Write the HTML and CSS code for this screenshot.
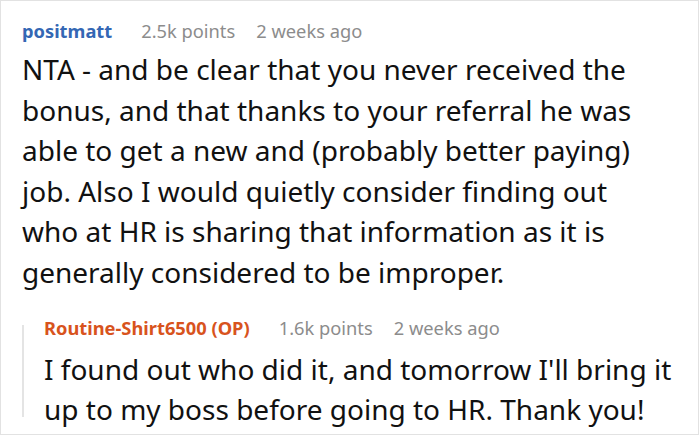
FILE: index.html
```html
<!DOCTYPE html>
<html>
<head>
<meta charset="utf-8">
<link rel="stylesheet" href="styles.css">
</head>
<body>
<div class="frame">
  <div class="comment">
    <div class="meta">
      <span class="author">positmatt</span>
      <span class="info">2.5k points</span>
      <span class="info">2 weeks ago</span>
    </div>
    <p class="body">NTA - and be clear that you never received the bonus, and that thanks to your referral he was able to get a new and (probably better paying) job. Also I would quietly consider finding out who at HR is sharing that information as it is generally considered to be improper.</p>
    <div class="reply">
      <div class="meta">
        <span class="author op">Routine-Shirt6500 (OP)</span>
        <span class="info">1.6k points</span>
        <span class="info">2 weeks ago</span>
      </div>
      <p class="body">I found out who did it, and tomorrow I'll bring it up to my boss before going to HR. Thank you!</p>
    </div>
  </div>
</div>
</body>
</html>
```
FILE: styles.css
```css
html, body {
  margin: 0;
  padding: 0;
  background: #fff;
}
.frame {
  box-sizing: border-box;
  width: 699px;
  height: 435px;
  border: 1px solid #e2e2e2;
  overflow: hidden;
  font-family: "Noto Sans", "Open Sans", sans-serif;
}
.comment {
  padding: 18px 0 0 21px;
}
.meta {
  display: flex;
  gap: 21px;
  font-size: 18.3px;
  line-height: 24px;
  height: 24px;
}
.author {
  font-weight: 700;
  color: #3467b4;
  margin-right: 8px;
}
.author.op {
  color: #d8531d;
}
.info {
  color: #8c8c8c;
}
.body {
  margin: 6px 0 0 0;
  font-size: 28px;
  line-height: 40.5px;
  color: #111;
  width: 645px;
}
.reply {
  margin-top: 24px;
  padding-left: 22px;
  background: linear-gradient(#e4e4e4, #e4e4e4) no-repeat 0 9px / 2px calc(100% - 21px);
}
.reply .body {
  margin-top: 9px;
  width: 650px;
  line-height: 40px;
}
```
